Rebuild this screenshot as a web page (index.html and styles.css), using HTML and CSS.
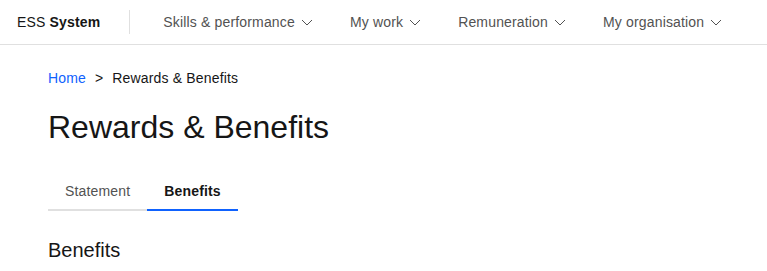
FILE: index.html
```html
<!DOCTYPE html>
<html lang="en">
<head>
    <meta charset="utf-8">
    <title>Rewards &amp; Benefits - ESS System</title>
    <link rel="stylesheet" href="styles.css">
</head>
<body>
    <header class="header">
        <a href="#" class="brand">ESS <b>System</b></a>
        <span class="header-divider"></span>
        <nav class="nav">
            <a href="#" class="nav-item">Skills &amp; performance
                <svg class="chevron" viewBox="0 0 16 16" width="16" height="16"><polyline points="3,6 8,11 13,6"/></svg>
            </a>
            <a href="#" class="nav-item">My work
                <svg class="chevron" viewBox="0 0 16 16" width="16" height="16"><polyline points="3,6 8,11 13,6"/></svg>
            </a>
            <a href="#" class="nav-item">Remuneration
                <svg class="chevron" viewBox="0 0 16 16" width="16" height="16"><polyline points="3,6 8,11 13,6"/></svg>
            </a>
            <a href="#" class="nav-item">My organisation
                <svg class="chevron" viewBox="0 0 16 16" width="16" height="16"><polyline points="3,6 8,11 13,6"/></svg>
            </a>
        </nav>
    </header>

    <main class="content">
        <div class="breadcrumb">
            <a href="#" class="breadcrumb-link">Home</a>
            <span class="breadcrumb-sep">&gt;</span>
            <span class="breadcrumb-current">Rewards &amp; Benefits</span>
        </div>

        <h1 class="page-title">Rewards &amp; Benefits</h1>

        <div class="tabs">
            <a href="#" class="tab">Statement</a>
            <a href="#" class="tab tab-selected">Benefits</a>
        </div>

        <h2 class="section-title">Benefits</h2>
    </main>
</body>
</html>
```

FILE: styles.css
```css
* {
    box-sizing: border-box;
    margin: 0;
    padding: 0;
}
body {
    background-color: #ffffff;
    color: #161616;
    font-family: "Liberation Sans", Arial, sans-serif;
    font-size: 14px;
    line-height: 18px;
    letter-spacing: 0.16px;
}
a {
    text-decoration: none;
    color: inherit;
}
.header {
    display: flex;
    align-items: center;
    height: 45px;
    border-bottom: 1px solid #e0e0e0;
}
.brand {
    padding: 0 29px 0 17px;
    color: #161616;
}
.brand b {
    font-weight: 700;
}
.header-divider {
    width: 1px;
    height: 24px;
    background-color: #e0e0e0;
}
.nav {
    display: flex;
    padding-left: 17px;
    gap: 3px;
}
.nav-item {
    display: flex;
    align-items: center;
    padding: 0 16px;
    color: #525252;
}
.chevron {
    margin-left: 4px;
    fill: none;
    stroke: #525252;
    stroke-width: 1;
}
.content {
    padding: 24px 48px 0;
}
.breadcrumb {
    display: flex;
    align-items: center;
}
.breadcrumb-link {
    color: #0f62fe;
}
.breadcrumb-sep {
    margin: 0 9px 0 9px;
}
.page-title {
    margin-top: 20px;
    font-size: 32px;
    line-height: 40px;
    font-weight: 400;
    letter-spacing: 0;
}
.tabs {
    display: flex;
    margin-top: 24px;
}
.tab {
    padding: 11px 17px 9px;
    color: #525252;
    border-bottom: 2px solid #e0e0e0;
}
.tab-selected {
    color: #161616;
    font-weight: 700;
    border-bottom-color: #0f62fe;
}
.section-title {
    margin-top: 25px;
    font-size: 20px;
    line-height: 28px;
    font-weight: 400;
    letter-spacing: 0;
}
```
